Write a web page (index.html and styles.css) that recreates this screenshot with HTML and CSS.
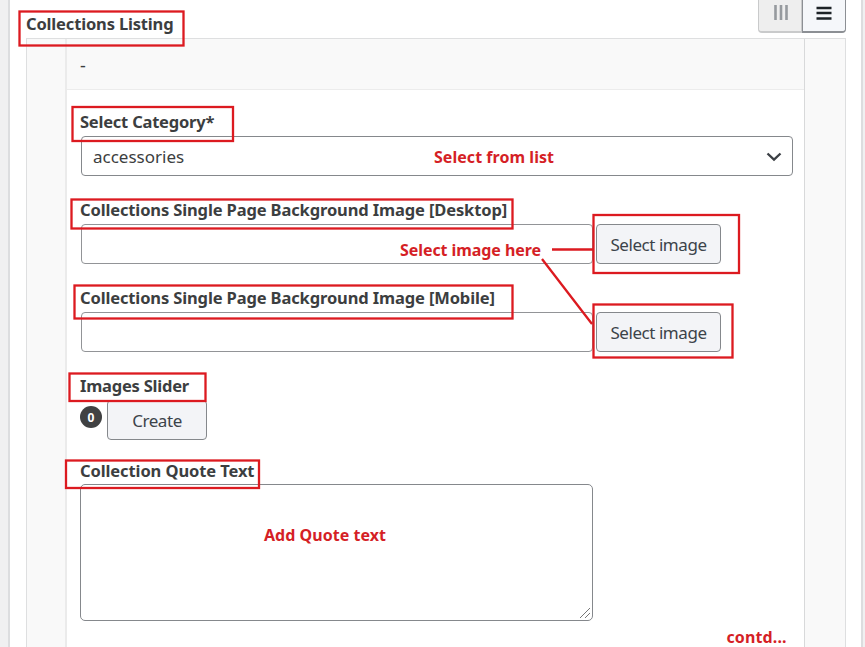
FILE: index.html
```html
<!DOCTYPE html>
<html lang="en">
<head>
<meta charset="utf-8">
<title>Collections Listing</title>
<link rel="stylesheet" href="styles.css">
</head>
<body>
<div class="page">
  <main class="panel">
    <header class="head">
      <h1 class="title">Collections Listing</h1>
      <div class="views">
        <button class="view" aria-label="Columns"><svg width="16" height="16" viewBox="0 0 16 16"><path d="M2.500 1v15M8 1v15M13.500 1v15" stroke="#969a9e" stroke-width="2.600"/></svg></button>
        <button class="view view-on" aria-label="Rows"><svg width="16" height="16" viewBox="0 0 16 16"><path d="M.5 3h15M.5 8h15M.5 13.500h15" stroke="#1d2327" stroke-width="2.300"/></svg></button>
      </div>
    </header>
    <section class="table">
      <div class="side side-left"></div>
      <div class="body">
        <div class="row-head">-</div>
        <div class="field field-first">
          <label class="label label-category">Select Category*</label>
          <div class="select"><span class="value">accessories</span><svg width="16" height="10" viewBox="0 0 16 10"><path d="M1.500 1.500 8 7.700 14.500 1.500" fill="none" stroke="#3c4045" stroke-width="2.300"/></svg></div>
        </div>
        <div class="field">
          <label class="label">Collections Single Page Background Image [Desktop]</label>
          <div class="line"><div class="input"></div><button class="button">Select image</button></div>
        </div>
        <div class="field">
          <label class="label">Collections Single Page Background Image [Mobile]</label>
          <div class="line"><div class="input"></div><button class="button">Select image</button></div>
        </div>
        <div class="field">
          <label class="label label-slider">Images Slider</label>
          <div class="line line-slider"><span class="count">0</span><button class="button create">Create</button></div>
        </div>
        <div class="field field-quote">
          <label class="label label-quote">Collection Quote Text</label>
          <div class="area"><svg width="12" height="12" viewBox="0 0 12 12"><path d="M1 11 11 1M6 11l5-5" stroke="#777" fill="none"/></svg></div>
        </div>
      </div>
      <div class="side side-right"></div>
    </section>
  </main>
  <svg class="notes" width="865" height="647" viewBox="0 0 865 647">
    <g fill="none" stroke="#dc1a20" stroke-width="2.300">
      <rect x="19.500" y="11.500" width="164" height="34"/>
      <rect x="72.500" y="107" width="160.500" height="34"/>
      <rect x="71.500" y="199.500" width="441" height="29"/>
      <rect x="74.500" y="285.500" width="438" height="33"/>
      <rect x="593.500" y="215" width="145.500" height="58"/>
      <rect x="593.500" y="304.500" width="139" height="53"/>
      <rect x="69.500" y="373.500" width="136" height="27.500"/>
      <rect x="66" y="460.500" width="193" height="27.500"/>
      <path d="M552 249.500h41M542 259l50 65"/>
    </g>
    <g class="note-text">
      <text x="434" y="162.500" textLength="120">Select from list</text>
      <text x="400" y="256" textLength="141">Select image here</text>
      <text x="264" y="541" textLength="122">Add Quote text</text>
      <text x="726.500" y="643" textLength="60">contd...</text>
    </g>
  </svg>
</div>
</body>
</html>
```
FILE: styles.css
```css
* { box-sizing: border-box; }
body { margin: 0; background: #f0f0f1; color: #3c3e40; font-family: "Noto Sans", "Open Sans", sans-serif; }
.page { position: relative; width: 865px; height: 647px; overflow: hidden; padding-left: 8px; }
.panel { width: 855px; height: 647px; background: #fff; border: solid #dcdddf; border-width: 0 2px; padding: 0 16px; display: flex; flex-direction: column; }
.head { height: 38px; flex: none; display: flex; justify-content: space-between; align-items: flex-start; }
.title { margin: 12px 0 0; font-size: 16.5px; line-height: 24px; font-weight: 700; letter-spacing: -.16px; white-space: nowrap; }
.views { display: flex; height: 33px; width: 88px; margin-right: -1px; }
.view { width: 44px; height: 33px; padding: 3px 0 0 1px; border: 1px solid #c9cacb; border-top: 0; border-bottom-width: 2px; border-radius: 0 0 0 4px; background: #eeeeee; display: flex; justify-content: center; }
.view-on { padding-left: 0; background: #f5f7fa; border-color: #8c8f94; border-radius: 0 0 4px 0; }
.view-on svg { margin: 2px 1px 0 0; }
.view:not(.view-on) svg { margin: 1px 0 0 1px; }
.table { flex: 1; display: flex; width: 820px; border: 1px solid #dedfe0; border-bottom: 0; }
.side { background: #f9f9f9; flex: none; }
.side-left { width: 40px; border-right: 2px solid #ebebeb; }
.side-right { width: 41px; border-left: 1px solid #d8d9da; }
.body { flex: 1; }
.row-head { height: 51px; background: #f9f9f9; border-bottom: 1px solid #ececec; padding: 14px 13px; font-size: 18px; line-height: 24px; }
.field { margin: 22px 0 0 13px; }
.field-first { margin-top: 20px; }
.field-quote { margin-top: 19px; }
.label { display: block; height: 26px; font-size: 16.5px; line-height: 24px; font-weight: 700; letter-spacing: -.13px; white-space: nowrap; }
.label-category { letter-spacing: -.22px; }
.label-slider { letter-spacing: -.22px; }
.label-quote { letter-spacing: -.1px; line-height: 23px; }
.select { width: 712px; height: 40px; margin-left: 1px; padding: 0 10px 0 11px; border: 1px solid #85888c; border-radius: 4px; display: flex; align-items: center; justify-content: space-between; }
.select svg { margin-top: 2px; }
.value { font-size: 17px; }
.line { display: flex; height: 40px; margin-left: 1px; }
.input { width: 512px; height: 40px; border: 1px solid #929497; border-radius: 4px; }
.button { width: 125px; height: 40px; margin-left: 3px; padding: 1px 0; border: 1px solid #85888c; border-radius: 4px; background: #f3f4f7; color: #3c434a; font: 17px "Noto Sans", sans-serif; letter-spacing: -.45px; white-space: nowrap; }
.line-slider { margin-left: 0; }
.count { width: 22px; height: 22px; margin-top: 6px; border-radius: 50%; background: #404142; color: #fff; font-size: 12px; line-height: 23px; font-weight: 700; text-align: center; }
.create { width: 100px; margin-left: 5px; }
.area { width: 513px; height: 137px; margin-top: -1px; border: 1px solid #85888c; border-radius: 5px; display: flex; align-items: flex-end; justify-content: flex-end; padding: 1px; }
.notes { position: absolute; left: 0; top: 0; }
.note-text { fill: #d51f26; font-family: "Noto Sans", sans-serif; font-size: 16px; font-weight: 700; }
```
